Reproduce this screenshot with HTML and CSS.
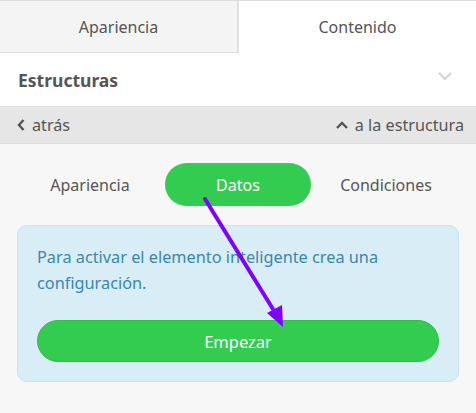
FILE: index.html
```html
<!DOCTYPE html>
<html lang="es">
<head>
    <meta charset="UTF-8">
    <title>Estructuras</title>
    <link rel="stylesheet" href="styles.css">
</head>
<body>

<div class="panel">
    <div class="tabs">
        <div class="tab">Apariencia</div>
        <div class="tab active">Contenido</div>
    </div>

    <div class="section-head">
        <span>Estructuras</span>
        <svg class="chev-down" width="16" height="10" viewBox="0 0 16 10"><path d="M2 2 L8 8 L14 2" fill="none" stroke="#d4d4d4" stroke-width="2"/></svg>
    </div>

    <div class="nav-bar">
        <a class="nav-link">
            <svg width="10" height="14" viewBox="0 0 10 14"><path d="M7.5 2 L3 7 L7.5 12" fill="none" stroke="#555" stroke-width="2.4"/></svg>
            atrás
        </a>
        <a class="nav-link">
            <svg width="14" height="10" viewBox="0 0 14 10"><path d="M2 8 L7 3 L12 8" fill="none" stroke="#555" stroke-width="2.4"/></svg>
            a la estructura
        </a>
    </div>

    <div class="content">
        <div class="pills">
            <div class="pill">Apariencia</div>
            <div class="pill selected">Datos</div>
            <div class="pill">Condiciones</div>
        </div>

        <div class="info-box">
            <p>Para activar el elemento inteligente crea una configuración.</p>
            <button type="button" class="start-button">Empezar</button>
        </div>
    </div>

    <!-- annotation arrow -->
    <svg class="arrow" width="476" height="413" viewBox="0 0 476 413">
        <line x1="205" y1="199" x2="276" y2="314" stroke="#7f00ff" stroke-width="4" stroke-linecap="round"/>
        <polygon points="283,327 267,313 282,305" fill="#7f00ff"/>
    </svg>
</div>

</body>
</html>
```

FILE: styles.css
```css
body {
    margin: 0; background: #f7f7f7;
    font-family: "Noto Sans", "Open Sans", sans-serif;
    color: #555;
}
.panel { position: relative; width: 476px; height: 413px; overflow: hidden; }

/* top tabs */
.tabs { display: flex; border-top: 1px solid #ddd; }
.tab {
    flex: 1; height: 52px; display: flex; align-items: center; justify-content: center;
    font-size: 16px; color: #555; background: #fff;
}
.tab:first-child { background: #f4f4f4; border-right: 2px solid #e0e0e0; border-bottom: 1px solid #ddd; height: 51px; }

.section-head {
    height: 53px; background: #fff; display: flex; align-items: center;
    justify-content: space-between; padding: 0 23px 0 18px;
    font-size: 17.5px; font-weight: bold; color: #555;
}
.chev-down { margin-top: -8px; }

.nav-bar {
    height: 36px; background: #e6e6e6;
    border-top: 1px solid #ddd; border-bottom: 1px solid #ddd;
    display: flex; align-items: center; justify-content: space-between;
    padding: 0 12px 0 16px; font-size: 16.2px;
}
.nav-link { display: flex; align-items: center; gap: 6px; color: #555; }
.nav-link svg { display: block; }

.content { padding: 19px 17px 0 17px; }
.pills { display: grid; grid-template-columns: 1fr 1fr 1fr; gap: 2px; }
.pill {
    height: 43px; display: flex; align-items: center; justify-content: center;
    font-size: 16px; color: #555; border-radius: 22px;
}
.pill.selected { background: #34cc50; color: #fff; }

.info-box {
    margin-top: 19px; background: #d9edf7; border: 1px solid #c3e6f0;
    border-radius: 10px; padding: 18px 19px 19px 19px;
}
.info-box p {
    margin: 0 0 24px 0; font-size: 16.3px; line-height: 26px; color: #3a87ad;
}
.start-button {
    display: block; width: 100%; height: 42px; border: 1px solid #2fbd4a;
    border-radius: 21px; background: #34cc50; color: #fff;
    font-family: inherit; font-size: 16.5px; cursor: pointer;
}

.arrow { position: absolute; left: 0; top: 0; pointer-events: none; }
```
